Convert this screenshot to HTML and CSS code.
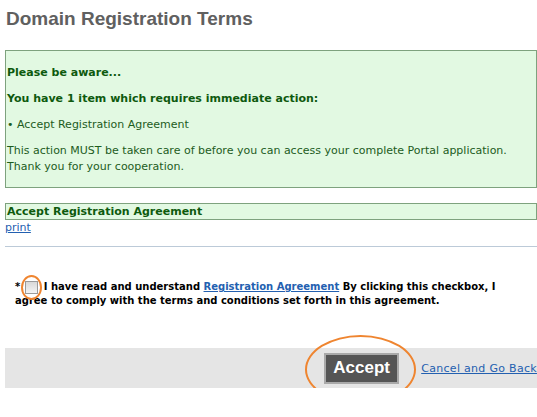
FILE: index.html
```html
<!DOCTYPE html>
<html lang="en">
<head>
	<meta charset="UTF-8">
	<title>Domain Registration Terms</title>
	<link rel="stylesheet" href="styles.css">
</head>
<body>
	<h1>Domain Registration Terms</h1>
	<div class="notice">
		<p class="strong">Please be aware...</p>
		<p class="strong">You have 1 item which requires immediate action:</p>
		<p>&bull; Accept Registration Agreement</p>
		<p>This action MUST be taken care of before you can access your complete Portal application.<br>Thank you for your cooperation.</p>
	</div>
	<h2 class="section">Accept Registration Agreement</h2>
	<a href="#" class="print">print</a>
	<hr>
	<p class="agree">
		<span class="req">*</span><span class="mark"><input type="checkbox" id="agree"></span>
		<label for="agree">I have read and understand <a href="#">Registration Agreement</a> By clicking this checkbox, I agree to comply with the terms and conditions set forth in this agreement.</label>
	</p>
	<div class="actions">
		<span class="mark big"><button type="button">Accept</button></span>
		<a href="#">Cancel and Go Back</a>
	</div>
</body>
</html>
```

FILE: styles.css
```css
html {
	margin: 0;
	padding: 0;
}
body {
	margin: 0;
	padding: 0 0 0 5px;
	font-family: "DejaVu Sans", Verdana, sans-serif;
	font-size: 11px;
	color: #000;
	background-color: #fff;
	overflow: hidden;
}
a {
	color: #2360b0;
}
h1 {
	font-family: "Liberation Sans", Arial, sans-serif;
	font-size: 19px;
	font-weight: bold;
	color: #606060;
	margin: 0 0 18px;
	padding: 9px 0 0 1px;
	height: 32px;
	line-height: 20px;
	box-sizing: border-box;
}
.notice {
	border: 1px solid #7ea27e;
	background-color: #e2f9e2;
	color: #1d5c1d;
	padding: 4px 1px 2px;
	line-height: 16px;
}
.notice p {
	margin: 10px 0;
}
.notice .strong {
	font-weight: bold;
	color: #0e5a0e;
}
.section {
	margin: 15px 0 0;
	border: 1px solid #7ea27e;
	background-color: #e2f9e2;
	color: #0e5a0e;
	font-size: 11px;
	line-height: 15px;
	padding: 0 1px;
}
.print {
	display: block;
	width: max-content;
	line-height: 16px;
}
hr {
	border: none;
	border-top: 1px solid #bccad8;
	margin: 10px 0 0;
}
.agree {
	margin: 33px 0 0;
	padding: 0 20px 0 10px;
	font-size: 10px;
	font-weight: bold;
	line-height: 14px;
}
.agree label {
	font-weight: bold;
}
.req {
	margin-right: 5px;
}
.mark {
	position: relative;
	display: inline-block;
	vertical-align: middle;
}
.mark::after {
	content: "";
	position: absolute;
	top: -6px;
	bottom: -6px;
	left: -4px;
	right: -2px;
	border: 2px solid #ef8530;
	border-radius: 50%;
}
input[type="checkbox"] {
	appearance: none;
	display: block;
	width: 13px;
	height: 13px;
	margin: 0 2px 0 0;
	border: 1px solid #9a9a9a;
	background: linear-gradient(#d8d8d8, #f4f4f4);
}
.actions {
	margin-top: 40px;
	height: 40px;
	background-color: #e5e5e5;
	display: flex;
	align-items: center;
	justify-content: flex-end;
	gap: 22px;
	white-space: nowrap;
}
.actions a {
	letter-spacing: 0.3px;
}
.big::after {
	top: -18px;
	bottom: -20px;
	left: -19px;
	right: -17px;
}
button {
	display: block;
	width: 75px;
	height: 31px;
	padding: 0;
	border: 2px solid #a9a9a9;
	background-color: #555;
	color: #fff;
	font-family: "Liberation Sans", Arial, sans-serif;
	font-size: 17px;
	font-weight: bold;
}
```
